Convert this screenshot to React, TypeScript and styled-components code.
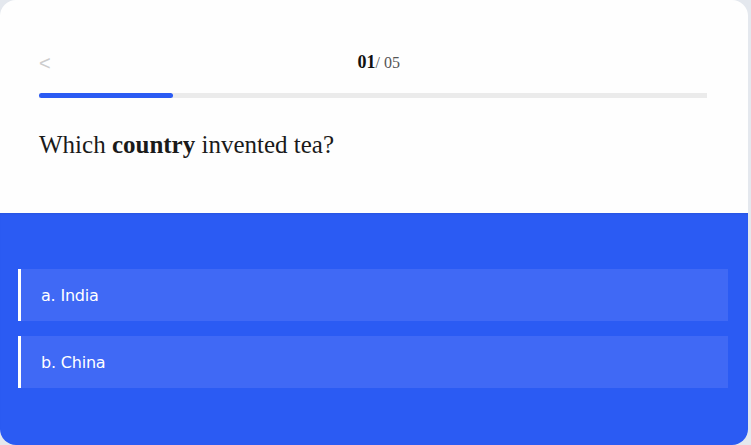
import React from "react";
import styled, { createGlobalStyle } from "styled-components";

const Global = createGlobalStyle`
  html, body { margin: 0; padding: 0; background: #e4e8ee; }
  body { font-family: "Liberation Serif", "Times New Roman", serif; }
`;

const Card = styled.div`
  width: 748px;
  height: 445px;
  background: #fefefe;
  border-radius: 16px;
  overflow: hidden;
  display: flex;
  flex-direction: column;
`;

const Top = styled.div`
  padding: 50px 41px 0 39px;
  height: 213px;
  box-sizing: border-box;
`;

const HeaderRow = styled.div`
  display: flex;
  align-items: center;
  height: 24px;
`;

const BackButton = styled.span`
  color: #cccccc;
  font-size: 20px;
  line-height: 24px;
  padding-top: 2px;
  font-family: "Liberation Sans", Arial, sans-serif;
`;

const Counter = styled.div`
  flex: 1;
  text-align: center;
  color: #111;
  font-family: "Liberation Serif", "Times New Roman", serif;
`;

const Current = styled.b`
  font-size: 18px;
`;

const Total = styled.span`
  font-size: 16px;
  color: #555;
`;

const Track = styled.div`
  margin-top: 19px;
  height: 5px;
  background: #ebebeb;
`;

const Fill = styled.div`
  height: 100%;
  background: #2b5bf3;
  border-radius: 3px;
`;

const Question = styled.h1`
  margin: 32px 0 0;
  font-weight: normal;
  font-family: "Liberation Serif", "Times New Roman", serif;
  font-size: 25px;
  color: #1a1a1a;
  line-height: 30px;
  b { font-weight: bold; }
`;

const Bottom = styled.div`
  flex: 1;
  background: #2b5bf3;
  box-shadow: inset 0 2px 2px -1px rgba(0, 0, 0, 0.08);
  padding: 56px 20px 0 18px;
  display: flex;
  flex-direction: column;
  gap: 15px;
`;

const Option = styled.div`
  height: 52px;
  background: #4069f5;
  border-left: 3px solid #ffffff;
  display: flex;
  align-items: center;
  padding-left: 20px;
  color: #ffffff;
  font-family: "DejaVu Sans", Verdana, sans-serif;
  font-size: 16px;
  letter-spacing: -0.2px;
`;

const options = ["a. India", "b. China"];
const progress = 1 / 5;

export default function App() {
  return (
    <>
      <Global />
      <Card>
        <Top>
          <HeaderRow>
            <BackButton>&lt;</BackButton>
            <Counter>
              <Current>01</Current>
              <Total>/ 05</Total>
            </Counter>
          </HeaderRow>
          <Track>
            <Fill style={{ width: `${progress * 100}%` }} />
          </Track>
          <Question>
            Which <b>country</b> invented tea?
          </Question>
        </Top>
        <Bottom>
          {options.map((o) => (
            <Option key={o}>{o}</Option>
          ))}
        </Bottom>
      </Card>
    </>
  );
}
